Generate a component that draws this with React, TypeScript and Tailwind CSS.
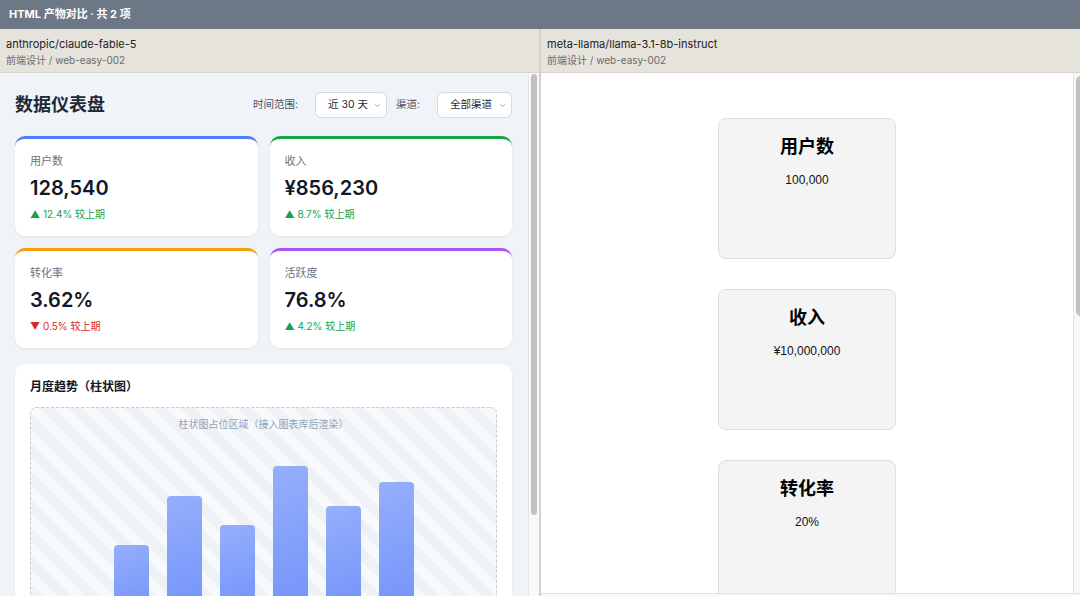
import { ChevronDown } from "lucide-react";

const stats = [
  { label: "用户数", value: "128,540", change: "12.4%", up: true, bar: "border-t-[#4f7dfb]" },
  { label: "收入", value: "¥856,230", change: "8.7%", up: true, bar: "border-t-[#16a34a]" },
  { label: "转化率", value: "3.62%", change: "0.5%", up: false, bar: "border-t-[#f59e0b]" },
  { label: "活跃度", value: "76.8%", change: "4.2%", up: true, bar: "border-t-[#a855f7]" }
];

const bars = [65, 114, 85, 144, 104, 128];

const simpleCards = [
  { title: "用户数", value: "100,000" },
  { title: "收入", value: "¥10,000,000" },
  { title: "转化率", value: "20%" }
];

function PanelHeader({ model }: { model: string }) {
  return (
    <div className="h-[44px] shrink-0 border-b border-[#d8d2cb] bg-[#e6e2dc] px-[6px] pt-[7px]">
      <p className="text-[11px] leading-[16px] text-[#222]">{model}</p>
      <p className="text-[10px] leading-[16px] text-[#6b6b6b]">前端设计 / web-easy-002</p>
    </div>
  );
}

function Select({ label, width }: { label: string; width: string }) {
  return (
    <div className={`flex h-[26px] ${width} shrink-0 items-center justify-between whitespace-nowrap rounded-[6px] border border-[#d5d9e0] bg-white pl-[12px] pr-[4px] text-[10.5px] text-[#1f2937]`}>
      <span>{label}</span>
      <ChevronDown className="size-[9px] shrink-0 text-[#6b7280]" strokeWidth={1.5} />
    </div>
  );
}

function Dashboard() {
  return (
    <div className="flex-1 overflow-hidden bg-[#f0f4f9] pl-[15px] pr-[16px] pt-[19px] font-['Inter','Noto_Sans_CJK_SC',sans-serif]">
      <div className="flex items-center justify-between">
        <h1 className="text-[18px] font-bold leading-[26px] text-[#1f2937]">数据仪表盘</h1>
        <div className="flex items-center gap-[9px] whitespace-nowrap text-[10.5px] text-[#4b5563]">
          <div className="flex items-center gap-[17px]">
            <span>时间范围:</span>
            <Select label="近 30 天" width="w-[72px]" />
          </div>
          <div className="flex items-center gap-[17px]">
            <span>渠道:</span>
            <Select label="全部渠道" width="w-[75px]" />
          </div>
        </div>
      </div>

      <div className="mt-[18px] grid grid-cols-2 gap-[12px]">
        {stats.map((s) => (
          <div key={s.label} className={`h-[100px] rounded-[10px] border-t-[3px] ${s.bar} bg-white px-[15px] pt-[14px] shadow-[0_1px_3px_rgba(15,23,42,0.06)]`}>
            <p className="text-[11px] leading-[16px] text-[#6b7280]">{s.label}</p>
            <p className="mt-[6px] text-[20px] font-semibold leading-[26px] text-[#111827]">{s.value}</p>
            <p className={`mt-[6px] text-[10px] leading-[14px] ${s.up ? "text-[#16a34a]" : "text-[#dc2626]"}`}>
              {s.up ? "▲" : "▼"} {s.change} 较上期
            </p>
          </div>
        ))}
      </div>

      <div className="mt-[16px] rounded-[10px] bg-white px-[15px] pt-[15px] shadow-[0_1px_3px_rgba(15,23,42,0.06)]">
        <h2 className="text-[12px] font-bold leading-[16px] text-[#111827]">月度趋势（柱状图）</h2>
        <div className="mt-[12px] flex h-[220px] flex-col rounded-[6px] border border-dashed border-[#c3ccd8] bg-[repeating-linear-gradient(45deg,#eef2f7_0,#eef2f7_10px,#f7f9fc_10px,#f7f9fc_20px)] pb-[16px] pt-[9px]">
          <p className="text-center text-[10px] leading-[14px] text-[#94a3b8]">柱状图占位区域（接入图表库后渲染）</p>
          <div className="flex flex-1 items-end justify-center gap-[18px]">
            {bars.map((h, i) => (
              <div
                key={i}
                className="w-[35px] rounded-t-[4px] bg-[linear-gradient(160deg,#95affb,#7394fa)]"
                style={{ height: h }}
              />
            ))}
          </div>
        </div>
      </div>
    </div>
  );
}

function LlamaPage() {
  return (
    <div className="flex flex-1 flex-col items-center gap-[30px] overflow-hidden bg-white pt-[45px] font-['Liberation_Sans','Noto_Sans_CJK_SC',sans-serif]">
      {simpleCards.map((c) => (
        <div key={c.title} className="h-[141px] w-[178px] shrink-0 rounded-[8px] border border-[#dedede] bg-[#f4f4f4] pt-[16px] text-center">
          <h3 className="text-[18px] font-bold leading-[24px] text-black">{c.title}</h3>
          <p className="mt-[13px] text-[12px] leading-[16px] text-[#111]">{c.value}</p>
        </div>
      ))}
    </div>
  );
}

export default function App() {
  return (
    <div className="flex h-[596px] w-[1080px] flex-col overflow-hidden font-['Inter','Noto_Sans_CJK_SC',sans-serif]">
      <div className="flex h-[29px] shrink-0 items-center bg-[#6d7886] px-[9px] text-[11px] font-bold text-white">
        HTML 产物对比 · 共 2 项
      </div>
      <div className="flex min-h-0 flex-1">
        <div className="flex w-[539px] flex-col">
          <PanelHeader model="anthropic/claude-fable-5" />
          <div className="flex min-h-0 flex-1">
            <Dashboard />
            <div className="w-[11px] border-l border-[#e6e6e6] bg-[#f8f8f8] pl-[2px] pt-[1px]">
              <div className="h-[441px] w-[6px] rounded-full bg-[#c1c1c1]" />
            </div>
          </div>
        </div>
        <div className="w-[2px] bg-[#d6cfc7]" />
        <div className="flex flex-1 flex-col">
          <PanelHeader model="meta-llama/llama-3.1-8b-instruct" />
          <div className="flex min-h-0 flex-1 flex-col">
            <div className="flex min-h-0 flex-1">
              <LlamaPage />
              <div className="w-[7px] border-l border-[#e2e2e2] bg-[#f7f7f7] pl-[2px] pt-[3px]">
                <div className="h-[240px] w-[5px] rounded-l-full bg-[#c1c1c1]" />
              </div>
            </div>
            <div className="h-[3px] border-t border-[#e2e2e2] bg-[#f7f7f7]" />
          </div>
        </div>
      </div>
    </div>
  );
}
